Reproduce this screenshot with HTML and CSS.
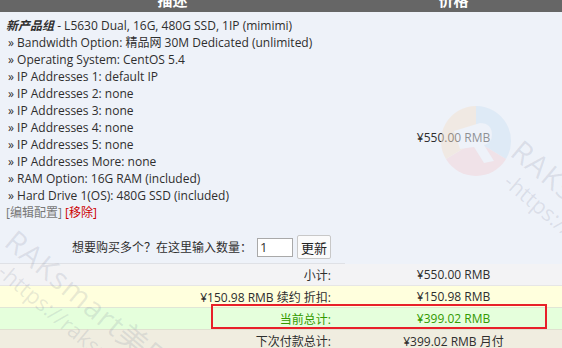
FILE: index.html
```html
<!DOCTYPE html>
<html lang="zh-CN">
<head>
    <meta charset="UTF-8">
    <title>购物车</title>
    <link rel="stylesheet" href="styles.css">
</head>
<body>
    <div class="cart">
        <table class="cart-table">
            <thead>
                <tr>
                    <th class="desc-col">描述</th>
                    <th class="price-col">价格</th>
                </tr>
            </thead>
            <tbody>
                <tr class="product-row">
                    <td class="desc">
                        <div class="product-name"><em>新产品组</em> - L5630 Dual, 16G, 480G SSD, 1IP (mimimi)</div>
                        <div>» Bandwidth Option: 精品网 30M Dedicated (unlimited)</div>
                        <div>» Operating System: CentOS 5.4</div>
                        <div>» IP Addresses 1: default IP</div>
                        <div>» IP Addresses 2: none</div>
                        <div>» IP Addresses 3: none</div>
                        <div>» IP Addresses 4: none</div>
                        <div>» IP Addresses 5: none</div>
                        <div>» IP Addresses More: none</div>
                        <div>» RAM Option: 16G RAM (included)</div>
                        <div>» Hard Drive 1(OS): 480G SSD (included)</div>
                        <div class="actions"><a href="#" class="edit">[编辑配置]</a> <a href="#" class="remove">[移除]</a></div>
                    </td>
                    <td class="price" rowspan="2">¥550.00 RMB</td>
                </tr>
                <tr class="qty-row">
                    <td class="qty">
                        <form class="qty-form">
                            <label for="qty">想要购买多个？在这里输入数量：</label>
                            <input type="text" id="qty" value="1">
                            <button type="button">更新</button>
                        </form>
                    </td>
                </tr>
                <tr class="sub-row">
                    <td class="label">小计:</td>
                    <td class="value">¥550.00 RMB</td>
                </tr>
                <tr class="discount-row">
                    <td class="label">¥150.98 RMB 续约 折扣:</td>
                    <td class="value">¥150.98 RMB</td>
                </tr>
                <tr class="total-row">
                    <td class="label">当前总计:</td>
                    <td class="value">¥399.02 RMB</td>
                </tr>
                <tr class="recurring-row">
                    <td class="label">下次付款总计:</td>
                    <td class="value">¥399.02 RMB 月付</td>
                </tr>
            </tbody>
        </table>

        <div class="highlight"></div>

        <div class="watermark wm-left">
            <div class="wm-name">RAKsmart美国</div>
            <div class="wm-url">-https://raksmart.com</div>
        </div>
        <div class="watermark wm-right">
            <div class="wm-name">RAKsmart</div>
            <div class="wm-url">-https://raksmart.com</div>
        </div>
        <svg class="wm-logo" width="72" height="72" viewBox="0 0 72 72">
            <path d="M36 36 L36 1 A35 35 0 0 1 66 54 Z" fill="#cfe3f4"/>
            <path d="M36 36 L66 54 A35 35 0 0 1 6 54 Z" fill="#f2d3d8"/>
            <path d="M36 36 L6 54 A35 35 0 0 1 36 1 Z" fill="#f3e2cf"/>
            <path d="M14 26 L40 18 Q52 18 52 30 Q52 38 44 40 L54 56 L44 58 L34 42 L20 44 Z" fill="#eef2f9"/>
        </svg>
    </div>
</body>
</html>
```

FILE: styles.css
```css
body {
    margin: 0;
    padding: 0;
    background: #eef2f9;
    font-family: 'Open Sans', 'Noto Sans CJK SC', sans-serif;
    font-size: 12px;
    color: #2e2e2e;
    overflow: hidden;
}
.cart {
    position: relative;
    margin-top: -12px;
}
.cart-table {
    width: 562px;
    border-collapse: collapse;
}
.cart-table th {
    background-color: #666;
    color: #fff;
    font-size: 15px;
    font-weight: 700;
    height: 24px;
    padding: 0;
    line-height: 24px;
}
.desc-col {
    width: 345px;
}
.cart-table td {
    padding: 0;
}
.desc {
    padding: 5px 0 0 6px !important;
    line-height: 17px;
    text-align: left;
    vertical-align: top;
}
.desc div {
    padding-left: 2px;
}
.desc .product-name {
    padding-left: 0;
}
.product-name em {
    font-weight: 700;
    font-style: italic;
}
.desc .actions {
    padding-left: 0;
}
.actions a {
    text-decoration: none;
}
.actions .edit {
    color: #777;
}
.actions .remove {
    color: #cc0000;
}
.price {
    text-align: center;
    vertical-align: middle;
}
.qty {
    text-align: right;
    padding: 14px 14px 4px 0 !important;
    height: 24px;
    border-bottom: 1px solid #dfe1e6;
}
.qty-form {
    margin: 0;
    display: flex;
    justify-content: flex-end;
    align-items: center;
    gap: 4px;
}
.qty-form label {
    font-size: 12px;
    margin-right: 1px;
}
.qty-form input {
    width: 30px;
    height: 17px;
    padding: 0 2px;
    border: 1px solid #a9a9a9;
    font-family: 'Open Sans', sans-serif;
    font-size: 13px;
    color: #333;
    background: #fff;
}
.qty-form button {
    height: 24px;
    padding: 0 3px;
    border: 1px solid #c8c8c8;
    border-radius: 2px;
    background: #fbfbfb;
    font-family: 'Noto Sans CJK SC', sans-serif;
    font-size: 13px;
    color: #222;
}
.label {
    text-align: right;
    padding-right: 14px !important;
    height: 21px;
}
.value {
    text-align: center;
    height: 21px;
}
.sub-row td {
    background-color: #f3f3f5;
    border-bottom: 1px solid #e6e6e6;
}
.discount-row td {
    background-color: #ffffdd;
    border-bottom: 1px solid #e0e6d6;
}
.total-row td {
    background-color: #e5ffdc;
    color: #339900;
    border-bottom: 1px solid #e0e0d0;
}
.recurring-row td {
    background-color: #f0ede0;
}
.highlight {
    position: absolute;
    left: 211px;
    top: 316px;
    width: 332px;
    height: 21px;
    border: 2px solid #e8202a;
}
.watermark {
    position: absolute;
    color: rgba(110, 120, 145, 0.16);
    transform-origin: 0 0;
    transform: rotate(40deg);
    white-space: nowrap;
    pointer-events: none;
}
.wm-name {
    font-size: 30px;
    line-height: 32px;
    letter-spacing: 1px;
}
.wm-url {
    font-size: 22px;
    line-height: 26px;
    margin-left: 14px;
}
.wm-left {
    left: 20px;
    top: 236px;
}
.wm-right {
    left: 526px;
    top: 146px;
}
.wm-logo {
    position: absolute;
    left: 440px;
    top: 117px;
    opacity: 0.5;
    pointer-events: none;
}
```
